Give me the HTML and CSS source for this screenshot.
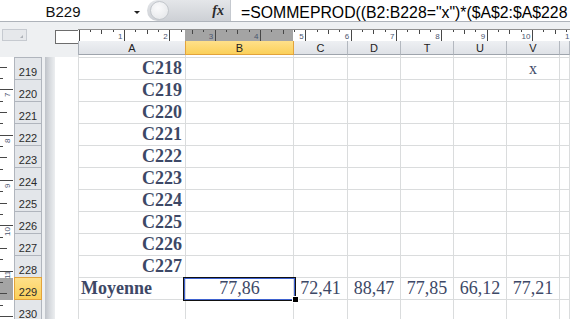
FILE: index.html
```html
<!DOCTYPE html>
<html lang="fr">
<head>
<meta charset="UTF-8" />
<title>Moyenne - SOMMEPROD</title>
<link rel="stylesheet" href="styles.css">
</head>
<body>

<div class="formula-bar">
  <div class="name-box">B229</div>
  <div class="name-drop"><span class="arrow"></span></div>
  <div class="fx-box"><span class="fx-knob"></span><span class="fx">fx</span></div>
  <div class="formula">=SOMMEPROD((B2:B228="x")*($A$2:$A$228</div>
</div>

<div class="sheet">
  <div class="corner">
    <div class="select-all"></div>
    <div class="ruler-corner"></div>
  </div>

  <div class="col-top">
    <svg class="hruler" width="492" height="12" viewBox="78 29 492 12">
      <rect x="78" y="29" width="492" height="12" fill="#fff"/>
      <rect x="185" y="30" width="108" height="11" fill="#a4a4a4"/>
      <line x1="78" y1="29.5" x2="570" y2="29.5" stroke="#8f8f8f"/>
      <!-- major ticks -->
      <path stroke="#474747" d="M79.5 30V41M124.5 30V41M169.5 30V41M215.5 30V41M260.5 30V41M305.5 30V41M351.5 30V41M396.5 30V41M441.5 30V41M487.5 30V41M532.5 30V41"/>
      <!-- half ticks -->
      <path stroke="#474747" d="M101.5 30V34M147.5 30V34M192.5 30V34M237.5 30V34M283.5 30V34M328.5 30V34M373.5 30V34M419.5 30V34M464.5 30V34M509.5 30V34M555.5 30V34"/>
      <!-- quarter ticks -->
      <path stroke="#474747" d="M90.5 30V32M113.5 30V32M135.5 30V32M158.5 30V32M181.5 30V32M203.5 30V32M226.5 30V32M249.5 30V32M271.5 30V32M294.5 30V32M317.5 30V32M339.5 30V32M362.5 30V32M385.5 30V32M407.5 30V32M430.5 30V32M453.5 30V32M475.5 30V32M498.5 30V32M521.5 30V32M543.5 30V32M566.5 30V32"/>
      <g class="rnum" text-anchor="end">
        <text x="122.4" y="38.5">1</text>
        <text x="167.8" y="38.5">2</text>
        <text x="213.1" y="38.5">3</text>
        <text x="258.4" y="38.5">4</text>
        <text x="303.8" y="38.5">5</text>
        <text x="349.1" y="38.5">6</text>
        <text x="394.4" y="38.5">7</text>
        <text x="439.8" y="38.5">8</text>
        <text x="485.1" y="38.5">9</text>
        <text x="530.4" y="38.5">10</text>
        <text x="569.5" y="38.5">1</text>
      </g>
    </svg>
    <div class="col-heads">
      <div>A</div>
      <div class="sel">B</div>
      <div>C</div>
      <div>D</div>
      <div>T</div>
      <div>U</div>
      <div>V</div>
      <div></div>
    </div>
  </div>

  <div class="row-side">
    <svg class="vruler" width="14" height="262" viewBox="0 57 14 262">
      <rect x="0" y="57" width="14" height="262" fill="#fff"/>
      <rect x="0" y="278" width="13" height="22" fill="#a4a4a4"/>
      <path stroke="#474747" d="M0 89.5H13M0 135.5H13M0 180.5H13M0 225.5H13M0 271.5H13M0 316.5H13"/>
      <path stroke="#474747" d="M0 67.5H7M0 112.5H7M0 157.5H7M0 203.5H7M0 248.5H7M0 293.5H7"/>
      <path stroke="#474747" d="M0 78.5H3M0 101.5H3M0 123.5H3M0 146.5H3M0 169.5H3M0 191.5H3M0 214.5H3M0 237.5H3M0 259.5H3M0 282.5H3M0 305.5H3"/>
      <g class="rnum">
        <text transform="translate(9.5 97) rotate(-90)">7</text>
        <text transform="translate(9.5 143) rotate(-90)">8</text>
        <text transform="translate(9.5 188) rotate(-90)">9</text>
        <text transform="translate(9.5 236) rotate(-90)">10</text>
        <text transform="translate(9.5 279) rotate(-90)">11</text>
      </g>
    </svg>
    <div class="row-heads">
      <div>219</div>
      <div>220</div>
      <div>221</div>
      <div>222</div>
      <div>223</div>
      <div>224</div>
      <div>225</div>
      <div>226</div>
      <div>227</div>
      <div>228</div>
      <div class="sel">229</div>
      <div>230</div>
    </div>
    <div class="side-bar"></div>
    <div class="page-margin"></div>
  </div>

  <div class="cells">
    <div class="row thin"><div></div><div></div><div></div><div></div><div></div><div></div><div></div><div></div></div>
    <div class="row"><div class="name">C218</div><div></div><div></div><div></div><div></div><div></div><div class="mark">x</div><div></div></div>
    <div class="row"><div class="name">C219</div><div></div><div></div><div></div><div></div><div></div><div></div><div></div></div>
    <div class="row"><div class="name">C220</div><div></div><div></div><div></div><div></div><div></div><div></div><div></div></div>
    <div class="row"><div class="name">C221</div><div></div><div></div><div></div><div></div><div></div><div></div><div></div></div>
    <div class="row"><div class="name">C222</div><div></div><div></div><div></div><div></div><div></div><div></div><div></div></div>
    <div class="row"><div class="name">C223</div><div></div><div></div><div></div><div></div><div></div><div></div><div></div></div>
    <div class="row"><div class="name">C224</div><div></div><div></div><div></div><div></div><div></div><div></div><div></div></div>
    <div class="row"><div class="name">C225</div><div></div><div></div><div></div><div></div><div></div><div></div><div></div></div>
    <div class="row"><div class="name">C226</div><div></div><div></div><div></div><div></div><div></div><div></div><div></div></div>
    <div class="row"><div class="name">C227</div><div></div><div></div><div></div><div></div><div></div><div></div><div></div></div>
    <div class="row"><div class="label">Moyenne</div><div>77,86</div><div>72,41</div><div>88,47</div><div>77,85</div><div>66,12</div><div>77,21</div><div></div></div>
    <div class="row"><div></div><div></div><div></div><div></div><div></div><div></div><div></div><div></div></div>

    <div class="cursor"></div>
    <div class="handle"></div>
  </div>
</div>

</body>
</html>
```

FILE: styles.css
```css
body {
  margin: 0;
  width: 570px;
  height: 319px;
  overflow: hidden;
  background: #eef0f2;
  font-family: "Liberation Sans", Arial, sans-serif;
}

/* formula bar */
.formula-bar {
  display: flex;
  height: 21px;
  background: #fff;
  border-bottom: 1px solid #aeb3ba;
}
.name-box {
  width: 126px;
  height: 19px;
  padding-top: 2px;
  text-align: center;
  font-size: 15px;
  line-height: 19px;
  color: #111;
}
.name-drop {
  width: 21px;
  display: flex;
  justify-content: center;
  padding-top: 11px;
  box-sizing: border-box;
}
.arrow {
  width: 0; height: 0;
  border-left: 3px solid transparent;
  border-right: 3px solid transparent;
  border-top: 3px solid #222;
}
.fx-box {
  width: 83px;
  display: flex;
  align-items: center;
  justify-content: space-between;
  padding: 0 6px 0 3px;
  box-sizing: border-box;
  border-radius: 11px 0 0 11px;
  background: linear-gradient(#e4e6e9, #cdd0d5);
}
.fx-knob {
  width: 17px; height: 17px;
  border-radius: 50%;
  border: 1px solid #c3c7cc;
  background: radial-gradient(circle at 40% 35%, #fbfbfc, #e2e4e7);
}
.fx {
  font-family: "Liberation Serif", "Times New Roman", serif;
  font-style: italic;
  font-weight: bold;
  font-size: 14px;
  color: #2a2a2a;
}
.formula {
  flex: 1;
  height: 19px;
  padding: 2px 0 0 10px;
  border-left: 1px solid #c5c9cf;
  font-size: 15.8px;
  line-height: 21px;
  white-space: nowrap;
  overflow: hidden;
  color: #000;
}

/* sheet */
.sheet {
  display: grid;
  grid-template-columns: 78px 1fr;
  grid-template-rows: 33px 264px;
}
.corner {
  display: flex;
  align-items: flex-start;
  padding: 7px 0 0 2px;
}
.select-all {
  position: relative;
  width: 25px; height: 12px;
  box-sizing: border-box;
  border: 1px solid #c6cad0;
  background: #e6e8eb;
}
.select-all::after {
  content: "";
  position: absolute;
  right: 3px; bottom: 2px;
  border-left: 3px solid transparent;
  border-bottom: 3px solid #aeb2b8;
}
.ruler-corner {
  width: 23px; height: 14px;
  margin: 1px 0 0 28px;
  box-sizing: border-box;
  border: 1px solid #6d6d6d;
  border-right: none;
  background: #fff;
}
.hruler {
  display: block;
  margin-top: 7px;
}
.rnum {
  font-family: "Liberation Sans", Arial, sans-serif;
  font-size: 8px;
  fill: #4b5670;
}

.col-heads,
.row {
  display: grid;
  grid-template-columns: 107px 108px 54px 53px 53px 53px 53px 1fr;
}
.col-heads {
  height: 14px;
  border-left: 1px solid #aab0b8;
}
.col-heads div {
  box-sizing: border-box;
  padding-top: 1px;
  border-right: 1px solid #b3b8bf;
  border-bottom: 1px solid #9ea4ac;
  background: linear-gradient(#eef0f3, #dfe2e7);
  text-align: center;
  font-size: 11px;
  line-height: 12px;
  color: #222;
}
.col-heads .sel {
  background: linear-gradient(#fee08a, #fbd05a);
  border-color: #e2a33c;
  box-shadow: -1px 0 0 #e2a33c;
}

.row-side {
  display: flex;
  padding-top: 2px;
}
.vruler { display: block; }
.row-heads {
  width: 28px;
  border-top: 1px solid #b0b5bd;
}
.row-heads div {
  height: 22px;
  box-sizing: border-box;
  padding-top: 4px;
  border: 1px solid #b0b5bd;
  border-top: none;
  background: #e3e6ea;
  text-align: center;
  font-family: "Liberation Sans Narrow", "Liberation Sans", Arial, sans-serif;
  font-size: 11px;
  line-height: 21px;
  overflow: hidden;
  color: #2b2b2b;
}
.row-heads .sel {
  background: linear-gradient(#fee08a, #fbd05a);
  border-color: #e2a33c;
  box-shadow: 0 -1px 0 #e2a33c;
}
.side-bar {
  width: 13px;
  background: linear-gradient(to right, #eef0f2 0, #eef0f2 3px, #bfc3c9 3px, #d8dbdf 8px, #eceef0 13px);
}
.page-margin {
  width: 23px;
  background: #fff;
}

/* cells */
.cells {
  position: relative;
  background: #fff;
  border-left: 1px solid #dadcdd;
  overflow: hidden;
}
.row { height: 22px; }
.row.thin { height: 3px; }
.row div {
  box-sizing: border-box;
  border-right: 1px solid #dadcdd;
  border-bottom: 1px solid #dadcdd;
  padding: 0 2px;
  font-family: "Liberation Serif", "Times New Roman", serif;
  font-size: 18px;
  line-height: 21px;
  text-align: center;
  white-space: nowrap;
  overflow: hidden;
  color: #3d4866;
}
.row .name {
  font-weight: bold;
  text-align: right;
  padding-right: 3px;
}
.row .label {
  font-weight: bold;
  text-align: left;
}
.row .mark { font-size: 16px; }

.cursor {
  position: absolute;
  left: 104px; top: 222px;
  width: 113px; height: 24px;
  box-sizing: border-box;
  border: 1px solid #111;
  box-shadow: inset 0 0 0 1px #3e62d0;
}
.handle {
  position: absolute;
  left: 214px; top: 242px;
  width: 5px; height: 5px;
  background: #000;
  border: 1px solid #fff;
  box-sizing: content-box;
  margin: -1px 0 0 -1px;
}
```
